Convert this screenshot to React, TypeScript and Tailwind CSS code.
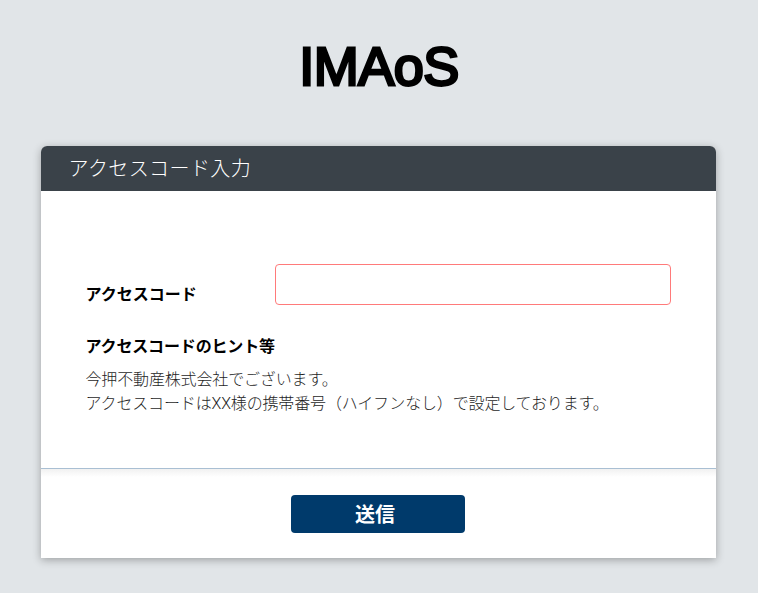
export default function App() {
  const jp = "font-['Roboto','Noto_Sans_CJK_JP',sans-serif]";
  return (
    <div className={`min-h-[593px] bg-[#e1e5e8] flex flex-col items-center pr-[2px] text-[#333] ${jp}`}>
      <div className="h-[146px] w-full flex justify-center pt-[33px] pl-[2px]">
        <div className="font-['Liberation_Sans',sans-serif] text-[54px] leading-[66px] tracking-[-0.5px] text-black [-webkit-text-stroke:2.8px_black] [filter:blur(0.7px)]">IMAoS</div>
      </div>
      <div className="w-[675px] h-[412px] bg-white rounded-t-[6px] shadow-[0_2px_8px_rgba(0,0,0,0.3)] flex flex-col">
        <div className="h-[45px] shrink-0 bg-[#3a4249] rounded-t-[6px] pl-[28px] pt-[1px] flex items-center text-white text-[20px] tracking-[0.4px] leading-[45px] font-light">アクセスコード入力</div>
        <div className="h-[277px] shrink-0 pl-[45px] pr-[45px] pt-[73px]">
          <div className="flex items-end h-[41px]">
            <label className="w-[189px] font-bold text-[16px] leading-[20px] text-black">アクセスコード</label>
            <input className="w-[396px] h-[41px] rounded-[4px] border border-[#ff7a7a] bg-white outline-none" />
          </div>
          <div className="mt-[31px] font-bold text-[16px] tracking-[-0.15px] leading-[22px] text-black">アクセスコードのヒント等</div>
          <div className="mt-[10px] text-[16px] tracking-[-0.15px] leading-[24px] text-[#1f1f1f] font-light">
            <p>今押不動産株式会社でございます。</p>
            <p>アクセスコードはXX様の携帯番号（ハイフンなし）で設定しております。</p>
          </div>
        </div>
        <div className="flex-1 border-t border-[#a9bfd3] bg-[linear-gradient(#f1f1f1,#ffffff_8px)] flex justify-center pt-[26px]">
          <button className="w-[174px] h-[38px] rounded-[4px] bg-[#003a6b] text-white font-bold text-[20px] leading-[38px] pr-[6px] pt-[1px]">送信</button>
        </div>
      </div>
    </div>
  );
}
